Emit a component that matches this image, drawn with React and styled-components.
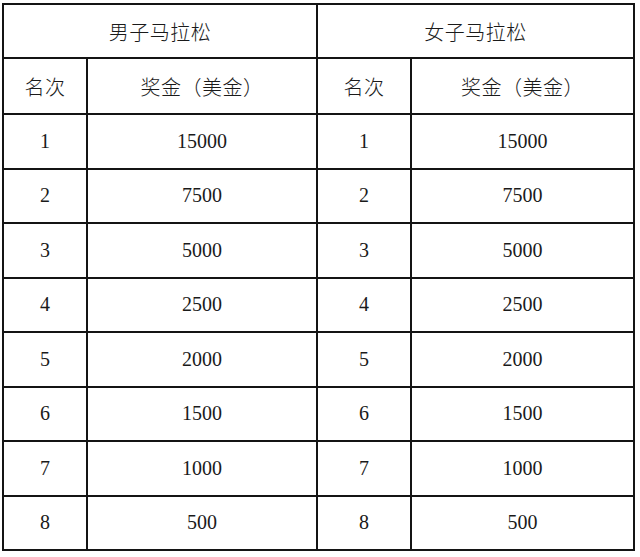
import React from 'react';
import styled, { createGlobalStyle } from 'styled-components';

const Global = createGlobalStyle`
  html, body {
    margin: 0;
    padding: 0;
    background: #fff;
  }
`;

const Page = styled.div`
  padding: 3px 0 0 2px;
`;

const Table = styled.table`
  border-collapse: collapse;
  table-layout: fixed;
  width: 633px;
  color: #1a1a1a;
`;

const Cell = styled.td`
  border: 2px solid #141414;
  text-align: center;
  vertical-align: middle;
  padding: 0;
  height: ${(p) => p.h}px;
  font-family: ${(p) => (p.num ? '"Liberation Serif", "Noto Serif CJK SC", serif' : '"Noto Sans CJK SC", sans-serif')};
  font-size: 20px;
  font-weight: ${(p) => (p.num ? 400 : 300)};
  letter-spacing: ${(p) => (p.num ? 0 : 0.5)}px;
`;

const prizes = [15000, 7500, 5000, 2500, 2000, 1500, 1000, 500];

export default function App() {
  return (
    <Page>
      <Global />
      <Table>
        <colgroup>
          <col style={{ width: 84 }} />
          <col style={{ width: 230 }} />
          <col style={{ width: 94 }} />
          <col style={{ width: 223 }} />
        </colgroup>
        <tbody>
          <tr>
            <Cell colSpan={2} h={52}>男子马拉松</Cell>
            <Cell colSpan={2} h={52}>女子马拉松</Cell>
          </tr>
          <tr>
            <Cell h={54}>名次</Cell>
            <Cell h={54}>奖金（美金）</Cell>
            <Cell h={54}>名次</Cell>
            <Cell h={54}>奖金（美金）</Cell>
          </tr>
          {prizes.map((p, i) => (
            <tr key={i}>
              <Cell num h={52.5}>{i + 1}</Cell>
              <Cell num h={52.5}>{p}</Cell>
              <Cell num h={52.5}>{i + 1}</Cell>
              <Cell num h={52.5}>{p}</Cell>
            </tr>
          ))}
        </tbody>
      </Table>
    </Page>
  );
}
